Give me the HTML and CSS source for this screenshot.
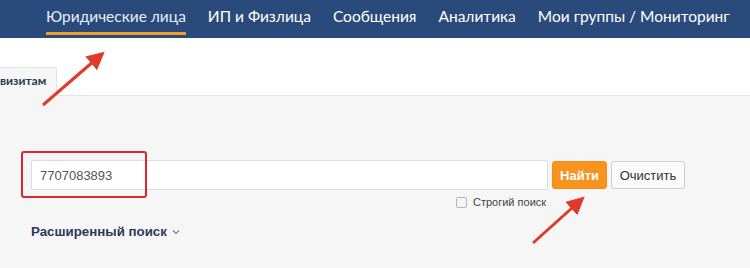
FILE: index.html
```html
<!DOCTYPE html>
<html lang="ru">
<head>
  <meta charset="UTF-8" />
  <meta name="viewport" content="width=device-width, initial-scale=1" />
  <title>Поиск по реквизитам</title>
  <link rel="stylesheet" href="styles.css">
</head>
<body>

  <!-- верхнее меню -->
  <nav class="topnav">
    <a class="nav-item active" href="#">Юридические лица</a>
    <a class="nav-item" href="#">ИП и Физлица</a>
    <a class="nav-item" href="#">Сообщения</a>
    <a class="nav-item" href="#">Аналитика</a>
    <a class="nav-item" href="#">Мои группы / Мониторинг</a>
  </nav>

  <!-- вкладки -->
  <div class="tabs">
    <div class="tab">визитам</div>
  </div>

  <!-- форма поиска -->
  <div class="search-panel">
    <div class="search-row">
      <input class="search-input" type="text" value="7707083893" />
      <button class="btn btn-find">Найти</button>
      <button class="btn btn-clear">Очистить</button>
    </div>
    <label class="strict">
      <span class="checkbox"></span>
      Строгий поиск
    </label>
    <a class="advanced" href="#">Расширенный поиск
      <svg width="8" height="6" viewBox="0 0 8 6"><path d="M1 1.5 L4 4.5 L7 1.5" fill="none" stroke="#7a8496" stroke-width="1.2"/></svg>
    </a>
  </div>

  <!-- пометки поверх скриншота -->
  <div class="mark-box"></div>
  <svg class="arrows" width="750" height="268" viewBox="0 0 750 268">
    <defs>
      <marker id="head" viewBox="0 0 10 10" refX="8" refY="5" markerWidth="6" markerHeight="6" orient="auto">
        <path d="M0 0 L10 5 L0 10 Z" fill="#e03a2a"/>
      </marker>
    </defs>
    <line x1="43" y1="105" x2="102" y2="54" stroke="#e03a2a" stroke-width="3" marker-end="url(#head)"/>
    <line x1="533" y1="243" x2="582" y2="199" stroke="#e03a2a" stroke-width="3" marker-end="url(#head)"/>
  </svg>

</body>
</html>
```

FILE: styles.css
```css
body {
  margin: 0;
  font-family: "Liberation Sans", Arial, sans-serif;
  background: #f6f6f6;
  color: #333;
  width: 750px;
  height: 268px;
  overflow: hidden;
  position: relative;
}

.topnav {
  display: flex;
  gap: 22px;
  height: 38px;
  padding-left: 46px;
  background: #2a4a7b;
  font-family: Lato, sans-serif;
  font-size: 15.5px;
}

.nav-item {
  color: #fff;
  text-decoration: none;
  line-height: 33px;
  white-space: nowrap;
  border-bottom: 3px solid transparent;
  height: 32px;
}

.nav-item.active {
  border-bottom-color: #f0a024;
  color: #e6edf7;
}

.tabs {
  height: 57px;
  background: #fff;
  border-bottom: 1px solid #e4e4e4;
  display: flex;
  align-items: flex-end;
}

.tab {
  width: 57px;
  height: 29px;
  margin-bottom: -1px;
  background: #f6f6f6;
  border: 1px solid #e4e4e4;
  border-left: none;
  border-bottom: none;
  box-sizing: border-box;
  font-family: Lato, sans-serif;
  font-weight: bold;
  font-size: 12px;
  color: #2b3a55;
  line-height: 26px;
  white-space: nowrap;
}

.search-panel {
  padding: 64px 0 0 31px;
}

.search-row {
  display: flex;
  align-items: center;
}

.search-input {
  width: 517px;
  height: 30px;
  box-sizing: border-box;
  border: 1px solid #dcdcdc;
  border-radius: 2px;
  padding: 0 8px;
  font-family: "Liberation Sans", Arial, sans-serif;
  font-size: 13px;
  color: #555;
  background: #fff;
}

.btn {
  height: 28px;
  border-radius: 3px;
  font-family: "Liberation Sans", Arial, sans-serif;
  font-size: 13px;
  cursor: pointer;
  box-sizing: border-box;
}

.btn-find {
  margin-left: 4px;
  width: 55px;
  background: #f7931e;
  color: #fff;
  border: 1px solid #f28c12;
  font-weight: bold;
}

.btn-clear {
  margin-left: 4px;
  width: 74px;
  background: #fafafa;
  color: #333;
  border: 1px solid #cfcfcf;
}

.strict {
  display: flex;
  align-items: center;
  gap: 6px;
  margin: 6px 0 0 425px;
  font-size: 11px;
  color: #444;
}

.checkbox {
  width: 9px;
  height: 9px;
  border: 1px solid #b5b5b5;
  border-radius: 2px;
  background: #f4f4f4;
}

.advanced {
  display: inline-flex;
  align-items: center;
  gap: 5px;
  margin-top: 16px;
  font-size: 13.3px;
  font-weight: bold;
  color: #2b3a5a;
  text-decoration: none;
}

.mark-box {
  position: absolute;
  left: 21px;
  top: 151px;
  width: 126px;
  height: 47px;
  border: 2px solid #d9262f;
  border-radius: 3px;
  box-sizing: border-box;
}

.arrows {
  position: absolute;
  left: 0;
  top: 0;
  pointer-events: none;
}
```
